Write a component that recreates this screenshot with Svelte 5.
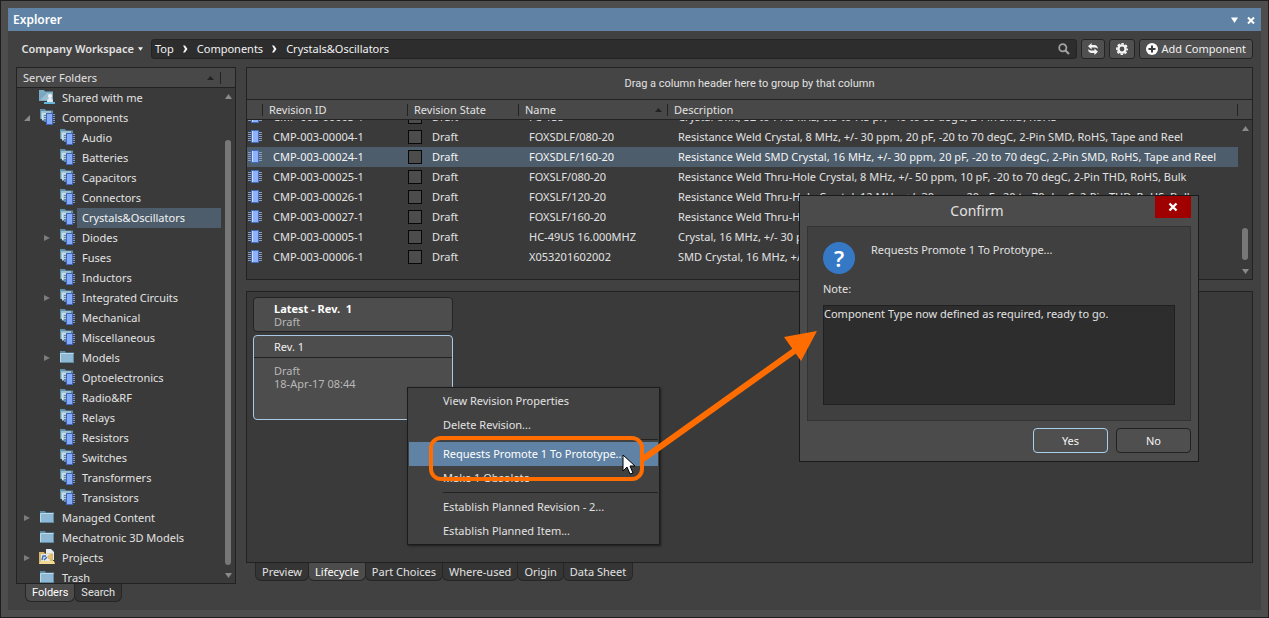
<script>
  import { onMount } from 'svelte';

  let scroller;
  let note = 'Component Type now defined as required, ready to go.';

  const crumbs = ['Top', 'Components', 'Crystals&Oscillators'];

  const folders = [
    { name: 'Shared with me', icon: 'shared', level: 0 },
    { name: 'Components', icon: 'parts', level: 0, arrow: 'open' },
    { name: 'Audio', icon: 'parts', level: 1 },
    { name: 'Batteries', icon: 'parts', level: 1 },
    { name: 'Capacitors', icon: 'parts', level: 1 },
    { name: 'Connectors', icon: 'parts', level: 1 },
    { name: 'Crystals&Oscillators', icon: 'parts', level: 1 },
    { name: 'Diodes', icon: 'parts', level: 1, arrow: 'closed' },
    { name: 'Fuses', icon: 'parts', level: 1 },
    { name: 'Inductors', icon: 'parts', level: 1 },
    { name: 'Integrated Circuits', icon: 'parts', level: 1, arrow: 'closed' },
    { name: 'Mechanical', icon: 'parts', level: 1 },
    { name: 'Miscellaneous', icon: 'parts', level: 1 },
    { name: 'Models', icon: 'folder', level: 1, arrow: 'closed' },
    { name: 'Optoelectronics', icon: 'parts', level: 1 },
    { name: 'Radio&RF', icon: 'parts', level: 1 },
    { name: 'Relays', icon: 'parts', level: 1 },
    { name: 'Resistors', icon: 'parts', level: 1 },
    { name: 'Switches', icon: 'parts', level: 1 },
    { name: 'Transformers', icon: 'parts', level: 1 },
    { name: 'Transistors', icon: 'parts', level: 1 },
    { name: 'Managed Content', icon: 'folder', level: 0, arrow: 'closed' },
    { name: 'Mechatronic 3D Models', icon: 'folder', level: 0 },
    { name: 'Projects', icon: 'projects', level: 0, arrow: 'closed' },
    { name: 'Trash', icon: 'folder', level: 0 }
  ];
  let selectedFolder = 'Crystals&Oscillators';

  const items = [
    { id: 'CMP-003-00003-1', name: 'FC-135', desc: 'Crystal Unit, 32 to 77.5 kHz, 6.5 to 7.5 pF, -40 to 85 degC, 2-Pin SMD, RoHS' },
    { id: 'CMP-003-00004-1', name: 'FOXSDLF/080-20', desc: 'Resistance Weld Crystal, 8 MHz, +/- 30 ppm, 20 pF, -20 to 70 degC, 2-Pin SMD, RoHS, Tape and Reel' },
    { id: 'CMP-003-00024-1', name: 'FOXSDLF/160-20', desc: 'Resistance Weld SMD Crystal, 16 MHz, +/- 30 ppm, 20 pF, -20 to 70 degC, 2-Pin SMD, RoHS, Tape and Reel' },
    { id: 'CMP-003-00025-1', name: 'FOXSLF/080-20', desc: 'Resistance Weld Thru-Hole Crystal, 8 MHz, +/- 50 ppm, 10 pF, -20 to 70 degC, 2-Pin THD, RoHS, Bulk' },
    { id: 'CMP-003-00026-1', name: 'FOXSLF/120-20', desc: 'Resistance Weld Thru-Hole Crystal, 12 MHz, +/- 30 ppm, 20 pF, -20 to 70 degC, 2-Pin THD, RoHS, Bulk' },
    { id: 'CMP-003-00027-1', name: 'FOXSLF/160-20', desc: 'Resistance Weld Thru-Hole Crystal, 16 MHz, +/- 30 ppm, 20 pF, -20 to 70 degC, 2-Pin THD, RoHS, Bulk' },
    { id: 'CMP-003-00005-1', name: 'HC-49US 16.000MHZ', desc: 'Crystal, 16 MHz, +/- 30 ppm, 18 pF, 2-Pin THD' },
    { id: 'CMP-003-00006-1', name: 'X053201602002', desc: 'SMD Crystal, 16 MHz, +/- 30 ppm, 4-Pin SMD' }
  ];
  let selectedItem = 'CMP-003-00024-1';

  const tabs = ['Preview', 'Lifecycle', 'Part Choices', 'Where-used', 'Origin', 'Data Sheet'];
  let activeTab = 'Lifecycle';

  const menu = [
    ['View Revision Properties', 'Delete Revision...'],
    ['Requests Promote 1 To Prototype...', 'Make 1 Obsolete'],
    ['Establish Planned Revision - 2...', 'Establish Planned Item...']
  ];
  const hotItem = 'Requests Promote 1 To Prototype...';

  onMount(() => {
    scroller.scrollTop = 13;
  });
</script>

<div class="window">
  <header class="titlebar">
    <h1>Explorer</h1>
    <button aria-label="Window menu">
      <svg width="8" height="8" viewBox="0 0 8 8"><path d="M0 1.500h7L3.500 7z" fill="#fff" /></svg>
    </button>
    <button aria-label="Close panel">
      <svg width="8" height="8" viewBox="0 0 8 8"><path d="M1 1.500l6 6M7 1.500l-6 6" stroke="#fff" stroke-width="2" /></svg>
    </button>
  </header>

  <div class="panel">
    <div class="toolbar">
      <button class="workspace">
        Company Workspace
        <svg width="5" height="4" viewBox="0 0 6 4"><path d="M0 0h6L3 4z" fill="#f0f0f0" /></svg>
      </button>
      <nav class="crumbs" aria-label="Path">
        {#each crumbs as crumb, i}
          {#if i > 0}
            <svg width="7" height="8" viewBox="0 0 7 8"><path d="M1 0.500h2L5.500 4 3 7.500H1L3 4z" fill="#f4f4f4" /></svg>
          {/if}
          <a href="#top">{crumb}</a>
        {/each}
        <button class="search" aria-label="Search">
          <svg width="12" height="12" viewBox="0 0 12 12" fill="none" stroke="#a0a0a0">
            <circle cx="4.800" cy="4.800" r="3.600" stroke-width="1.800" />
            <path d="M7.500 7.500l3.500 3.500" stroke-width="2.200" />
          </svg>
        </button>
      </nav>
      <button class="tool" aria-label="Refresh">
        <svg width="12" height="12" viewBox="0 0 12 12" fill="#f4f4f4">
          <path d="M1 3.300L4.600 0v2H7.500Q10.500 2 11 5.800 9.500 4.600 7.500 4.600H4.600v2z" />
          <path d="M11 8.700L7.400 12v-2H4.500Q1.500 10 1 6.200 2.500 7.400 4.500 7.400h2.900v-2z" />
        </svg>
      </button>
      <button class="tool settings" aria-label="Settings">
        <svg width="12" height="12" viewBox="0 0 12 12" fill="none" stroke="#f4f4f4">
          <circle cx="6" cy="6" r="3.600" stroke-width="2.400" />
          <circle cx="6" cy="6" r="5.200" stroke-width="1.600" stroke-dasharray="2.500 1.584" stroke-dashoffset="1.250" />
        </svg>
      </button>
      <button class="tool add">
        <svg width="12" height="12" viewBox="0 0 12 12">
          <circle cx="6" cy="6" r="6" fill="#fff" />
          <path d="M6 2.500v7M2.500 6h7" stroke="#3c3c3c" stroke-width="2" />
        </svg>
        Add Component
      </button>
    </div>

    <div class="content">
      <aside>
        <div class="box folders">
          <div class="head">
            <span>Server Folders</span>
            <svg width="7" height="4" viewBox="0 0 7 4"><path d="M0 4h7L3.500 0z" fill="#222" /></svg>
          </div>
          <div class="tree-wrap">
            <ul class="tree">
              {#each folders as folder}
                <li class:child={folder.level === 1}>
                  <span class="twist">
                    {#if folder.arrow === 'open'}
                      <svg width="6" height="6" viewBox="0 0 6 6"><path d="M6 0v6H0z" fill="#8a8a8a" /></svg>
                    {:else if folder.arrow === 'closed'}
                      <svg width="6" height="6" viewBox="0 0 6 6"><path d="M0 0l6 3-6 3z" fill="#7c7c7c" /></svg>
                    {/if}
                  </span>
                  <svg class="icon" width="16" height="16" viewBox="0 0 16 16">
                    {#if folder.icon === 'parts'}
                      <path d="M1 0h5l1 1.500h7V12H3V10H1z" fill="#5f8fae" />
                      <path d="M2 2h10v8H2z" fill="#9dbfce" />
                      <path d="M3 4h10v7H3z" fill="#b4cfda" />
                      <path d="M3.500 11V4.500H13" stroke="#cde4ec" fill="none" />
                      <path d="M5 6.500h2M5 8.500h2M5 10.500h2M5 12.500h2" stroke="#5f83a8" />
                      <path d="M14 5.500h2M14 7.500h2M14 9.500h2M14 11.500h2M14 13.500h2" stroke="#8798c0" />
                      <path d="M7 4h7v12H7z" fill="#3f68bd" />
                      <path d="M8 5h5v10H8z" fill="#86abfb" />
                    {:else if folder.icon === 'folder'}
                      <path d="M1 2h5l1 1.500h8V14H1z" fill="#5d8aa5" />
                      <path d="M2 4.500h12V13H2z" fill="#8fb8d4" />
                      <path d="M1.500 13V4.500h13" stroke="#b8dcec" fill="none" />
                    {:else if folder.icon === 'shared'}
                      <path d="M0 1h5l1 1.500h8V12H0z" fill="#79adc6" />
                      <path d="M1 4h12v7H1z" fill="#9cbdd0" />
                      <path d="M1 11L8 4H1z" fill="#7aa6c2" />
                      <circle cx="11" cy="7" r="2" fill="#f0f4f8" />
                      <path d="M8 13q0-4 3-4t3 4z" fill="#dfe9f2" />
                      <path d="M5 13h11v2H5z" fill="#62b4d8" />
                    {:else}
                      <path d="M7 0h5l3 3v8H7z" fill="#e8edf2" />
                      <path d="M0 3h5l1 1.500h8V15H0z" fill="#d9b768" />
                      <path d="M2 5h9v7H2z" fill="#e4eaec" />
                      <path d="M3 11l1-4h3M5 11l3-3" stroke="#4370b5" stroke-width="1.500" fill="none" />
                      <path d="M0 15l2-3h13l1 3z" fill="#f3d992" />
                      <circle cx="11" cy="8" r="2.500" fill="#e3bd70" />
                    {/if}
                  </svg>
                  <button class="label" class:selected={folder.name === selectedFolder} on:click={() => (selectedFolder = folder.name)}>{folder.name}</button>
                </li>
              {/each}
            </ul>
            <div class="scrollbar">
              <svg width="7" height="5" viewBox="0 0 7 5"><path d="M0 5h7L3.500 0z" fill="#8a8a8a" /></svg>
              <div class="track"><div class="thumb tall"></div></div>
              <svg width="7" height="5" viewBox="0 0 7 5"><path d="M0 0h7L3.500 5z" fill="#8a8a8a" /></svg>
            </div>
          </div>
        </div>
        <div class="tabs compact">
          <button class="active">Folders</button>
          <button>Search</button>
        </div>
      </aside>

      <main>
        <section class="box grid">
          <p class="group-hint">Drag a column header here to group by that column</p>
          <div class="grid-body">
            <div class="scroller" bind:this={scroller}>
              <table>
                <colgroup>
                  <col class="c-icon" /><col class="c-id" /><col class="c-state" /><col class="c-name" /><col />
                </colgroup>
                <thead>
                  <tr>
                    <th aria-label="Type"></th>
                    <th>Revision ID</th>
                    <th>Revision State</th>
                    <th>
                      <span class="sorted">
                        Name
                        <svg width="7" height="4" viewBox="0 0 7 4"><path d="M0 4h7L3.500 0z" fill="#222" /></svg>
                      </span>
                    </th>
                    <th>Description</th>
                  </tr>
                </thead>
                <tbody>
                  {#each items as item}
                    <tr class:selected={item.id === selectedItem} on:click={() => (selectedItem = item.id)}>
                      <td class="chip">
                        <svg width="16" height="16" viewBox="0 0 16 16">
                          <path d="M1 3.500h14M1 5.500h14M1 7.500h14M1 9.500h14M1 11.500h14" stroke="#8f9cb4" />
                          <path d="M4 1h8v13H4z" fill="#3f6fc4" />
                          <path d="M5 2h6v11H5z" fill="#8db1fa" />
                          <path d="M5 2h1v11H5z" fill="#c8dafd" />
                        </svg>
                      </td>
                      <td>{item.id}</td>
                      <td class="state"><div><span class="swatch"></span>Draft</div></td>
                      <td>{item.name}</td>
                      <td>{item.desc}</td>
                    </tr>
                  {/each}
                </tbody>
              </table>
            </div>
            <div class="side">
              <div class="side-cap"></div>
              <div class="scrollbar">
                <svg width="7" height="5" viewBox="0 0 7 5"><path d="M0 5h7L3.500 0z" fill="#8a8a8a" /></svg>
                <div class="track low"><div class="thumb short"></div></div>
                <svg width="7" height="5" viewBox="0 0 7 5"><path d="M0 0h7L3.500 5z" fill="#8a8a8a" /></svg>
              </div>
            </div>
          </div>
        </section>

        <section class="box lifecycle">
          <div class="card">
            <strong>Latest - Rev.&nbsp; 1</strong>
            <span>Draft</span>
          </div>
          <div class="card current">
            <h2>Rev. 1</h2>
            <div class="card-body">
              <span>Draft</span>
              <span>18-Apr-17 08:44</span>
            </div>
          </div>
        </section>
        <div class="tabs">
          {#each tabs as tab}
            <button class:active={tab === activeTab} on:click={() => (activeTab = tab)}>{tab}</button>
          {/each}
        </div>
      </main>
    </div>
  </div>

  <div class="menu" role="menu">
    {#each menu as group, i}
      {#if i > 0}<hr />{/if}
      {#each group as entry}
        <button role="menuitem" class:hot={entry === hotItem}>{entry}</button>
      {/each}
    {/each}
  </div>

  <div class="dialog" role="dialog" aria-labelledby="confirm-title">
    <div class="dialog-head">
      <h2 id="confirm-title">Confirm</h2>
      <button aria-label="Close">
        <svg width="10" height="10" viewBox="0 0 10 10"><path d="M1.500 1.500l7 7M8.500 1.500l-7 7" stroke="#fff" stroke-width="2.400" /></svg>
      </button>
    </div>
    <div class="dialog-body">
      <div class="question">
        <span class="mark">?</span>
        <p>Requests Promote 1 To Prototype...</p>
      </div>
      <label for="note">Note:</label>
      <textarea id="note" bind:value={note} spellcheck="false"></textarea>
    </div>
    <div class="dialog-foot">
      <button class="default">Yes</button>
      <button>No</button>
    </div>
  </div>

  <svg class="callout" width="400" height="160" viewBox="0 0 400 160">
    <rect x="6" y="113" width="211" height="41" rx="10" fill="none" stroke="#ff6d00" stroke-width="4" />
    <path d="M218 134L372 24" stroke="#ff6d00" stroke-width="6" />
    <path d="M392 6L359 12 376 36z" fill="#ff6d00" />
    <path d="M198 130v16l4-4 3 7 3-1-3-7h5z" fill="#fff" stroke="#000" />
  </svg>
</div>

<style>
  :global(body) {
    background: #4d4d4d;
  }

  .window {
    position: relative;
    display: flex;
    flex-direction: column;
    box-sizing: border-box;
    height: 100vh;
    min-height: 600px;
    padding: 7px;
    border: 1px solid #1e1e1e;
    background: #4d4d4d;
    color: #e2e2e2;
    font: 11px/14px "Noto Sans", "Open Sans", sans-serif;
  }

  .window :global(*) {
    box-sizing: border-box;
  }

  button {
    padding: 0;
    border: 0;
    background: none;
    color: inherit;
    font: inherit;
  }

  svg {
    display: block;
    flex-shrink: 0;
  }

  h1, h2, p, ul {
    margin: 0;
    padding: 0;
    font-size: inherit;
  }

  .titlebar {
    display: flex;
    align-items: center;
    gap: 8px;
    height: 23px;
    padding: 0 6px 0 5px;
    background: #6082a4;
    color: #fff;
  }

  .titlebar h1 {
    flex: 1;
    font-size: 12px;
    font-weight: 600;
    line-height: 20px;
  }

  .panel {
    flex: 1;
    display: flex;
    flex-direction: column;
    min-height: 0;
    padding: 8px;
    background: #414141;
  }

  .toolbar {
    display: flex;
    gap: 4px;
    height: 20px;
  }

  .workspace {
    display: flex;
    align-items: center;
    justify-content: flex-end;
    gap: 4px;
    width: 131px;
    padding-right: 4px;
    font-weight: 600;
  }

  .crumbs {
    flex: 1;
    display: flex;
    align-items: center;
    gap: 8px;
    padding: 0 6px 0 3px;
    border: 1px solid #242424;
    border-radius: 3px;
    background: #2d2d2d;
  }

  .crumbs a {
    color: #f2f2f2;
    text-decoration: none;
  }

  .search {
    margin-left: auto;
  }

  .tool {
    display: flex;
    align-items: center;
    justify-content: center;
    gap: 3px;
    width: 24px;
    border: 1px solid #242424;
    border-radius: 3px;
    background: #505050;
    color: #f0f0f0;
  }

  .settings {
    width: 26px;
  }

  .add {
    width: auto;
    padding: 0 6px;
  }

  .content {
    flex: 1;
    display: flex;
    gap: 10px;
    min-height: 0;
    margin-top: 8px;
  }

  .box {
    border: 1px solid #222;
    background: #3a3a3a;
  }

  aside {
    display: flex;
    flex-direction: column;
    width: 220px;
  }

  .folders {
    flex: 1;
    display: flex;
    flex-direction: column;
    min-height: 0;
  }

  .head {
    display: flex;
    align-items: center;
    justify-content: space-between;
    height: 20px;
    padding: 0 21px 0 6px;
    border-bottom: 1px solid #222;
    background: linear-gradient(90deg, transparent 203px, #222 203px, #222 204px, transparent 204px) 0 4px / 100% 12px no-repeat, #484848;
  }

  .tree-wrap {
    flex: 1;
    display: flex;
    min-height: 0;
  }

  .tree {
    flex: 1;
    overflow: hidden;
    list-style: none;
  }

  .tree li {
    display: flex;
    align-items: center;
    height: 20px;
    padding-left: 7px;
  }

  .tree li.child {
    padding-left: 27px;
  }

  .twist {
    width: 15px;
  }

  .icon {
    margin-bottom: 2px;
  }

  .label {
    flex: 1;
    height: 20px;
    padding-left: 5px;
    margin-left: 2px;
    text-align: left;
  }

  .selected {
    background: #4d5d6b;
    color: #f4f4f4;
  }

  .scrollbar {
    display: flex;
    flex-direction: column;
    align-items: center;
    width: 14px;
    padding: 6px 0 5px;
    flex: none;
  }

  .track {
    flex: 1;
    display: flex;
    flex-direction: column;
    align-items: center;
    width: 100%;
    padding: 41px 0 8px;
  }

  .thumb {
    width: 6px;
    border-radius: 3px;
    background: #777;
  }

  .tall {
    flex: 1;
  }

  .low {
    justify-content: flex-end;
    padding: 0 0 9px;
  }

  .short {
    height: 32px;
  }

  .tabs {
    display: flex;
    padding-left: 9px;
  }

  .tabs button {
    height: 18px;
    padding: 0 6px;
    border: 1px solid #262626;
    border-top: 0;
    border-radius: 0 0 6px 6px;
    background: #353535;
  }

  .tabs button + button {
    margin-left: -1px;
  }

  .tabs .active {
    background: #4c4c4c;
    color: #fff;
  }

  .compact {
    font-family: Roboto, sans-serif;
  }

  main {
    flex: 1;
    display: flex;
    flex-direction: column;
    min-width: 0;
    margin-bottom: 21px;
  }

  .group-hint {
    height: 32px;
    border-bottom: 1px solid #222;
    background: #454545;
    font-family: Roboto, sans-serif;
    line-height: 31px;
    text-align: center;
  }

  .grid-body {
    display: flex;
    height: 179px;
  }

  .scroller {
    flex: 1;
    min-width: 0;
    padding-bottom: 12px;
    overflow: hidden;
  }

  table {
    width: 100%;
    table-layout: fixed;
    border-spacing: 0;
    white-space: nowrap;
  }

  .c-icon {
    width: 16px;
  }

  .c-id {
    width: 145px;
  }

  .c-state {
    width: 111px;
  }

  .c-name {
    width: 149px;
  }

  th {
    position: sticky;
    top: 0;
    height: 20px;
    padding: 0 6px;
    border-bottom: 1px solid #222;
    background: linear-gradient(#222, #222) 100% 4px / 1px 12px no-repeat, #484848;
    font-weight: 400;
    text-align: left;
  }

  .sorted {
    display: flex;
    align-items: center;
    justify-content: space-between;
  }

  td {
    height: 20px;
    padding: 0 0 0 10px;
    overflow: hidden;
  }

  .chip {
    padding: 0;
  }

  .state {
    padding-left: 0;
  }

  .state div {
    display: flex;
    align-items: center;
    gap: 10px;
  }

  .swatch {
    width: 14px;
    height: 14px;
    border: 1px solid #080808;
    background: #4c4c4c;
  }

  .side {
    display: flex;
    flex-direction: column;
    width: 14px;
  }

  .side-cap {
    height: 20px;
    border-bottom: 1px solid #222;
    background: #484848;
  }

  .side .scrollbar {
    flex: 1;
  }

  .lifecycle {
    flex: 1;
    min-height: 0;
    margin-top: 11px;
    padding: 5px 6px;
  }

  .card {
    display: flex;
    flex-direction: column;
    width: 200px;
    height: 35px;
    padding: 4px 20px;
    border: 1px solid #232323;
    border-radius: 4px;
    background: #4d4d4d;
    color: #b8b8b8;
    line-height: 13px;
  }

  .card strong {
    color: #fff;
  }

  .current {
    height: 85px;
    margin-top: 3px;
    padding: 0;
    border-color: #a9c9e6;
  }

  .current h2 {
    padding: 4px 20px 3px;
    border-bottom: 1px solid #232323;
    color: #f0f0f0;
    font-weight: 400;
    line-height: 14px;
  }

  .card-body {
    display: flex;
    flex-direction: column;
    padding: 6px 20px;
  }

  .menu {
    position: absolute;
    top: 386px;
    left: 406px;
    width: 253px;
    padding: 1px;
    border: 1px solid #1c1c1c;
    background: #414141;
    box-shadow: 1px 1px 2px #1c1c1c;
  }

  .menu button {
    display: block;
    width: 100%;
    height: 24px;
    padding-left: 34px;
    text-align: left;
  }

  .menu .hot {
    background: #6082a4;
    color: #fff;
  }

  .menu hr {
    height: 1px;
    margin: 2px 0 2px 34px;
    border: 0;
    background: #222;
  }

  .dialog {
    position: absolute;
    top: 194px;
    left: 798px;
    width: 400px;
    padding: 0 7px 8px;
    border: 1px solid #1a1a1a;
    background: #4b4b4b;
  }

  .dialog-head {
    display: flex;
    height: 30px;
  }

  .dialog-head h2 {
    flex: 1;
    padding-right: 8px;
    font-size: 14px;
    font-weight: 400;
    line-height: 30px;
    text-align: center;
  }

  .dialog-head button {
    display: flex;
    align-items: center;
    justify-content: center;
    width: 36px;
    height: 22px;
    background: #a00000;
  }

  .dialog-body {
    display: flex;
    flex-direction: column;
    height: 195px;
    padding: 15px;
    border: 1px solid #333;
    background: #404040;
  }

  .question {
    display: flex;
    gap: 16px;
    height: 40px;
  }

  .question p {
    line-height: 16px;
  }

  .dialog-body label {
    margin-bottom: 9px;
  }

  .mark {
    width: 32px;
    height: 32px;
    border-radius: 50%;
    background: #3579c6;
    color: #fff;
    font-size: 22px;
    font-weight: 600;
    line-height: 32px;
    text-align: center;
  }

  textarea {
    flex: 1;
    padding: 1px 0;
    border: 1px solid #202020;
    background: #2d2d2d;
    color: #e2e2e2;
    font: inherit;
    outline: 0;
    resize: none;
  }

  .dialog-foot {
    display: flex;
    justify-content: flex-end;
    gap: 8px;
    padding-top: 7px;
  }

  .dialog-foot button {
    width: 75px;
    height: 25px;
    border: 1px solid #222;
    border-radius: 4px;
    background: #4f4f4f;
    color: #f4f4f4;
  }

  .dialog-foot .default {
    border-color: #a9d0ea;
  }

  .callout {
    position: absolute;
    top: 324px;
    left: 424px;
    pointer-events: none;
  }
</style>
